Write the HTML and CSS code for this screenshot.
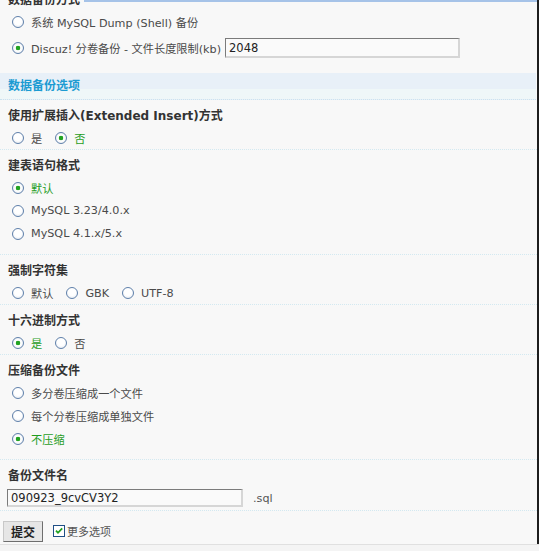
FILE: index.html
```html
<!DOCTYPE html>
<html lang="zh">
<head>
<meta charset="utf-8">
<title>数据备份</title>
<link rel="stylesheet" href="styles.css">
</head>
<body>
<div class="page">
  <div class="topline"></div>
  <div class="frame">
    <div class="sec first">
      <div class="lbl cut">数据备份方式</div>
      <div class="opt tall"><span class="radio"></span><span class="t">系统 MySQL Dump (Shell) 备份</span></div>
      <div class="opt tall"><span class="radio on"></span><span class="t">Discuz! 分卷备份 - 文件长度限制(kb)</span><input class="txt size" type="text" value="2048"></div>
    </div>

    <div class="band">数据备份选项</div>

    <div class="sec">
      <div class="lbl">使用扩展插入(Extended Insert)方式</div>
      <div class="opt">
        <span class="radio"></span><span class="t gap">是</span>
        <span class="radio on"></span><span class="t sel">否</span>
      </div>
    </div>

    <div class="sec list">
      <div class="lbl">建表语句格式</div>
      <div class="opt"><span class="radio on"></span><span class="t sel">默认</span></div>
      <div class="opt"><span class="radio"></span><span class="t">MySQL 3.23/4.0.x</span></div>
      <div class="opt"><span class="radio"></span><span class="t">MySQL 4.1.x/5.x</span></div>
    </div>

    <div class="sec">
      <div class="lbl">强制字符集</div>
      <div class="opt">
        <span class="radio"></span><span class="t gap">默认</span>
        <span class="radio"></span><span class="t gap">GBK</span>
        <span class="radio"></span><span class="t">UTF-8</span>
      </div>
    </div>

    <div class="sec">
      <div class="lbl">十六进制方式</div>
      <div class="opt">
        <span class="radio on"></span><span class="t sel gap">是</span>
        <span class="radio"></span><span class="t">否</span>
      </div>
    </div>

    <div class="sec list">
      <div class="lbl">压缩备份文件</div>
      <div class="opt"><span class="radio"></span><span class="t">多分卷压缩成一个文件</span></div>
      <div class="opt"><span class="radio"></span><span class="t">每个分卷压缩成单独文件</span></div>
      <div class="opt"><span class="radio on"></span><span class="t sel">不压缩</span></div>
    </div>

    <div class="sec file">
      <div class="lbl">备份文件名</div>
      <div class="filerow"><input class="txt name" type="text" value="090923_9cvCV3Y2"><span class="ext">.sql</span></div>
    </div>

    <div class="actions">
      <button class="btn" type="button">提交</button>
      <span class="check"><svg width="12" height="12" viewBox="0 0 12 12"><rect x="0.5" y="0.5" width="11" height="11" fill="#fff" stroke="#1f4f86"/><path d="M3 5.6 L5 7.8 L9.2 3.4" fill="none" stroke="#1fa01f" stroke-width="1.8"/></svg></span>
      <span class="more">更多选项</span>
    </div>
  </div>
  <div class="foot"></div>
</div>
</body>
</html>
```
FILE: styles.css
```css
html, body {
  margin: 0;
  padding: 0;
  background: #f8f8f8;
  overflow: hidden;
}
body {
  width: 539px;
  height: 551px;
  font-family: "DejaVu Sans", "Noto Sans CJK SC", sans-serif;
  font-size: 11.2px;
  color: #4a4a4a;
}
.page {
  position: relative;
  width: 539px;
  height: 551px;
  overflow: hidden;
}
.topline {
  position: absolute;
  top: 0;
  left: 0;
  width: 537px;
  height: 2px;
  background: #a6c3e8;
}
.frame {
  width: 537px;
  margin-top: -9px;
  border-right: 2px solid #1e1e1e;
  background: #f8f8f8;
}
.sec {
  padding-top: 7px;
  border-bottom: 1px dotted #d3e9f1;
}
.sec.first {
  padding-top: 0;
  padding-bottom: 12px;
  border-bottom: none;
}
.sec.list {
  padding-bottom: 9px;
}
.band {
  width: 536px;
  height: 27px;
  line-height: 27px;
  padding-left: 8px;
  box-sizing: border-box;
  font-size: 12px;
  font-weight: bold;
  color: #1c9bd2;
  background: linear-gradient(#e8f0f8 0, #e8f0f8 63%, #eff7f8 63%, #eff7f8 100%);
  border-bottom: 1px dotted #cbe3ee;
}
.lbl {
  height: 18px;
  line-height: 18px;
  padding-left: 8px;
  font-size: 12px;
  font-weight: bold;
  color: #333;
  white-space: nowrap;
}
.lbl.cut {
  position: relative;
  z-index: 1;
  display: inline-block;
  padding-right: 4px;
  background: #f8f8f8;
}
.opt {
  display: flex;
  align-items: center;
  height: 22px;
  margin-top: 2px;
  padding-left: 12px;
  white-space: nowrap;
}
.sec.list .opt {
  height: 23px;
  margin-top: 0;
}
.sec.list .lbl + .opt {
  margin-top: 1px;
}
.opt.tall {
  height: 26px;
  margin-top: 0;
}
.radio {
  box-sizing: border-box;
  flex: none;
  width: 12px;
  height: 12px;
  margin-right: 7px;
  border: 1px solid #5f80aa;
  border-radius: 50%;
  background: radial-gradient(circle at 50% 40%, #ffffff 45%, #dde3ec 100%);
}
.radio.on {
  background: radial-gradient(circle, #23a323 0, #23a323 2px, #ffffff 2.6px, #ffffff 45%, #dde3ec 100%);
}
.t.gap {
  margin-right: 13px;
}
.t.sel {
  color: #1f9d1f;
}
.txt {
  box-sizing: border-box;
  border-style: solid;
  border-width: 1px 2px 2px 1px;
  border-color: #7b7b7b #d6d6d6 #d6d6d6 #7b7b7b;
  background: #fafafa;
  font-family: "DejaVu Sans", sans-serif;
  font-size: 11.5px;
  color: #222;
  padding: 0 3px;
  outline: none;
}
.txt.size {
  width: 235px;
  height: 20px;
  margin-left: 4px;
}
.filerow {
  display: flex;
  align-items: center;
  padding: 4px 0 3px 7px;
}
.txt.name {
  width: 236px;
  height: 18px;
}
.ext {
  margin-left: 10px;
  color: #555;
}
.actions {
  display: flex;
  align-items: center;
  box-sizing: border-box;
  height: 33px;
  padding: 9px 0 2px 3px;
}
.btn {
  box-sizing: border-box;
  width: 40px;
  height: 21px;
  padding: 0;
  border-style: solid;
  border-width: 1px;
  border-color: #c8c8c8 #6e6e6e #6e6e6e #c8c8c8;
  background: #e6e6e6;
  font-family: "Noto Sans CJK SC", sans-serif;
  font-size: 12px;
  font-weight: bold;
  color: #222;
}
.check {
  display: flex;
  margin-left: 10px;
  margin-right: 2px;
}
.more {
  color: #555;
  font-size: 11px;
}
.foot {
  border-top: 1px solid #e0e0e0;
  height: 10px;
  background: #f4f4f4;
}
```
